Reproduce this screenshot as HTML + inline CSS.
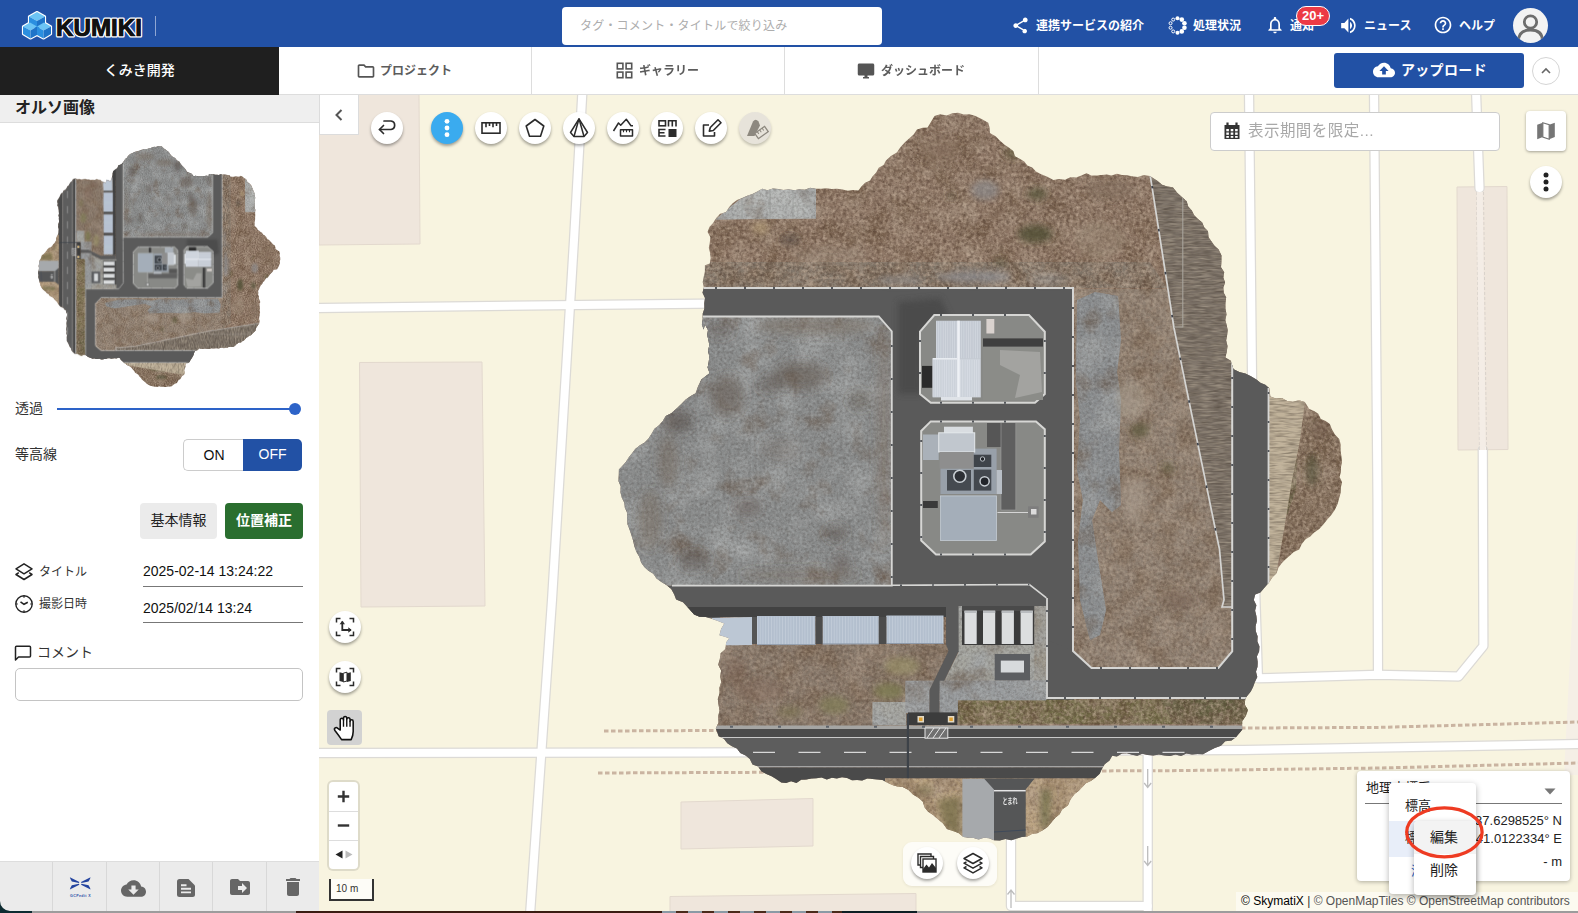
<!DOCTYPE html>
<html lang="ja">
<head>
<meta charset="utf-8">
<title>KUMIKI</title>
<style>
*{box-sizing:border-box;margin:0;padding:0}
html,body{width:1578px;height:913px;overflow:hidden;background:#fff}
body{font-family:"Liberation Sans","Noto Sans CJK JP",sans-serif;color:#222;position:relative;font-size:14px}
.abs{position:absolute}
#topbar{position:absolute;left:0;top:0;width:1578px;height:47px;background:#2251a5}
#topbar .nav{position:absolute;top:0;height:47px;line-height:52px;color:#fff;font-size:12px;font-weight:700;white-space:nowrap}
#search{position:absolute;left:562px;top:7px;width:320px;height:38px;background:#fff;border-radius:4px;color:#adadad;font-size:12px;line-height:38px;padding-left:18px;letter-spacing:.2px}
#bar2{position:absolute;left:0;top:47px;width:1578px;height:48px;background:#fff;border-bottom:1px solid #ddd;z-index:5}
#proj{position:absolute;left:0;top:0;width:279px;height:48px;background:#1f1f1f;color:#fff;font-size:14px;font-weight:500;text-align:center;line-height:47px}
.tab{position:absolute;top:0;height:47px;border-right:1px solid #ddd;color:#5c5c5c;font-size:12px;font-weight:700;line-height:49px;white-space:nowrap}
#upload{position:absolute;left:1334px;top:6px;width:190px;height:35px;background:#2251a5;border-radius:3px;color:#fff;font-size:14px;font-weight:700;line-height:34px;letter-spacing:.3px}
#side{position:absolute;left:0;top:94px;width:319px;height:817px;background:#fff}
#sidehead{position:absolute;left:0;top:0;width:319px;height:29px;background:#efefef;border-bottom:1px solid #ddd;font-size:16px;font-weight:700;color:#222;padding-left:15px;line-height:27px}
#map{position:absolute;left:319px;top:94px;width:1259px;height:817px;background:#f8f4e0;overflow:hidden}
.rbtn{position:absolute;width:32px;height:32px;border-radius:50%;background:#fff;box-shadow:0 2px 3px rgba(0,0,0,.35)}
.rbtn svg{position:absolute;left:0;top:0}
</style>
</head>
<body>
<div id="topbar">
  <svg class="abs" style="left:20px;top:8px" width="140" height="34" viewBox="0 0 140 34">
    <!-- cube logo -->
    <g stroke="#fff" stroke-width="2.200" stroke-linejoin="round" fill="#fff">
      <path d="M17 4 L25 8.5 L25 15 L31 18.5 L31 26 L23.5 30.5 L17 27 L10.5 30.5 L3 26 L3 18.5 L9 15 L9 8.5 Z"/>
    </g>
    <g stroke="none">
      <path d="M17 4 L25 8.5 L17 13 L9 8.5 Z" fill="#6cc4f5"/>
      <path d="M9 8.5 L17 13 L17 21 L9 16.5 Z" fill="#2b8fe0"/>
      <path d="M25 8.5 L17 13 L17 21 L25 16.5 Z" fill="#1f74c9"/>
      <path d="M10 14.5 L17 18.5 L10.5 22.5 L3 18.5 Z" fill="#6cc4f5"/>
      <path d="M3 18.5 L10.5 22.5 L10.5 30.5 L3 26 Z" fill="#2b8fe0"/>
      <path d="M17 18.5 L10.5 22.5 L10.5 30.5 L17 27 Z" fill="#1f74c9"/>
      <path d="M24 14.5 L31 18.5 L23.5 22.5 L17 18.5 Z" fill="#6cc4f5"/>
      <path d="M17 18.5 L23.5 22.5 L23.5 30.5 L17 27 Z" fill="#2b8fe0"/>
      <path d="M31 18.5 L23.5 22.5 L23.5 30.5 L31 26 Z" fill="#1f74c9"/>
    </g>
    <text x="36" y="27.5" font-family="'Liberation Sans',sans-serif" font-weight="700" font-size="23" fill="#111" stroke="#fff" stroke-width="3.2" stroke-linejoin="round" paint-order="stroke" textLength="86" lengthAdjust="spacingAndGlyphs">KUMIKI</text>
    <text x="36" y="27.5" font-family="'Liberation Sans',sans-serif" font-weight="700" font-size="23" fill="#111" stroke="#111" stroke-width="0.700" textLength="86" lengthAdjust="spacingAndGlyphs">KUMIKI</text>
    <rect x="135" y="8" width="1" height="20" fill="#8fa6d3"/>
  </svg>
  <div id="search">タグ・コメント・タイトルで絞り込み</div>

  <svg class="abs" style="left:1011px;top:16px" width="19" height="19" viewBox="0 0 24 24"><path fill="#fff" d="M18 16.08c-.76 0-1.44.3-1.96.77L8.91 12.7c.05-.23.09-.46.09-.7s-.04-.47-.09-.7l7.05-4.11c.54.5 1.250.81 2.040.81 1.660 0 3-1.340 3-3s-1.340-3-3-3-3 1.340-3 3c0 .24.040.47.090.7L8.040 9.810C7.500 9.310 6.790 9 6 9c-1.660 0-3 1.340-3 3s1.340 3 3 3c.79 0 1.500-.31 2.040-.81l7.120 4.160c-.5.21-.8.430-.8.650 0 1.610 1.310 2.920 2.920 2.920s2.920-1.310 2.920-2.920-1.310-2.920-2.920-2.920z"/></svg>
  <div class="nav" style="left:1036px">連携サービスの紹介</div>

  <svg class="abs" style="left:1167px;top:15px" width="21" height="21" viewBox="0 0 21 21"><circle cx="10.50" cy="3.20" r="2.00" fill="#fff"/><circle cx="14.79" cy="4.59" r="2.30" fill="#fff"/><circle cx="17.44" cy="8.24" r="2.30" fill="#fff"/><circle cx="17.44" cy="12.76" r="2.30" fill="#fff"/><circle cx="14.79" cy="16.41" r="2.30" fill="#fff"/><circle cx="10.50" cy="17.80" r="2.00" fill="#fff"/><circle cx="6.21" cy="16.41" r="1.500" fill="none" stroke="#fff" stroke-width="1"/><circle cx="3.56" cy="12.76" r="1.500" fill="none" stroke="#fff" stroke-width="1"/><circle cx="3.56" cy="8.24" r="1.500" fill="none" stroke="#fff" stroke-width="1"/><circle cx="6.21" cy="4.59" r="1.500" fill="none" stroke="#fff" stroke-width="1"/></svg>
  <div class="nav" style="left:1193px">処理状況</div>

  <svg class="abs" style="left:1265px;top:15px" width="20" height="20" viewBox="0 0 24 24"><path fill="#fff" d="M12 22c1.100 0 2-.9 2-2h-4c0 1.100.9 2 2 2zm6-6v-5c0-3.070-1.630-5.640-4.500-6.320V4c0-.83-.67-1.500-1.500-1.500s-1.500.67-1.500 1.500v.68C7.640 5.360 6 7.920 6 11v5l-2 2v1h16v-1l-2-2zm-2 1H8v-6c0-2.480 1.510-4.500 4-4.500s4 2.020 4 4.500v6z"/></svg>
  <div class="nav" style="left:1290px">通知</div>
  <div class="abs" style="left:1296px;top:6px;width:34px;height:20px;border-radius:10px;background:#ec3a45;border:1.500px solid #fff;color:#fff;font-size:13px;font-weight:700;text-align:center;line-height:17px;letter-spacing:0">20+</div>

  <svg class="abs" style="left:1337px;top:15px" width="21" height="21" viewBox="0 0 24 24"><path fill="#fff" d="M3 9v6h4l5 5V4L7 9H3zm13.500 3c0-1.770-1.020-3.290-2.500-4.030v8.050c1.480-.73 2.500-2.250 2.500-4.020zM14 3.230v2.060c2.890.86 5 3.540 5 6.710s-2.110 5.850-5 6.710v2.060c4.010-.91 7-4.490 7-8.770s-2.990-7.860-7-8.770z" transform="translate(2 0) scale(.92 1)"/></svg>
  <div class="nav" style="left:1364px">ニュース</div>

  <svg class="abs" style="left:1433px;top:15px" width="20" height="20" viewBox="0 0 24 24"><path fill="#fff" d="M11 18h2v-2h-2v2zm1-16C6.480 2 2 6.480 2 12s4.480 10 10 10 10-4.480 10-10S17.520 2 12 2zm0 18c-4.410 0-8-3.590-8-8s3.590-8 8-8 8 3.590 8 8-3.590 8-8 8zm0-14c-2.210 0-4 1.790-4 4h2c0-1.100.9-2 2-2s2 .9 2 2c0 2-3 1.750-3 5h2c0-2.250 3-2.500 3-5 0-2.210-1.790-4-4-4z"/></svg>
  <div class="nav" style="left:1459px">ヘルプ</div>

  <div class="abs" style="left:1513px;top:8px;width:35px;height:35px;border-radius:50%;background:#f3f3f3;overflow:hidden">
    <svg width="35" height="35" viewBox="0 0 35 35" fill="none" stroke="#6e6e6e" stroke-width="2.800"><circle cx="17.500" cy="14" r="6.200"/><path d="M5.500 33 C5.500 24.500 11 22 17.500 22 C24 22 29.500 24.500 29.500 33"/></svg>
  </div>
</div>

<div id="bar2">
  <div id="proj">くみき開発</div>
  <div class="tab" style="left:279px;width:253px">
    <svg class="abs" style="left:77px;top:14px" width="20" height="20" viewBox="0 0 24 24"><path fill="#555" d="M9.170 6l2 2H20v10H4V6h5.170M10 4H4c-1.100 0-1.990.9-1.990 2L2 18c0 1.100.9 2 2 2h16c1.100 0 2-.9 2-2V8c0-1.100-.9-2-2-2h-8l-2-2z"/></svg>
    <span class="abs" style="left:101px">プロジェクト</span>
  </div>
  <div class="tab" style="left:532px;width:253px">
    <svg class="abs" style="left:84px;top:15px" width="17" height="17" viewBox="0 0 17 17" fill="none" stroke="#555" stroke-width="1.600"><rect x="1.300" y="1.300" width="5.600" height="5.600"/><rect x="10.100" y="1.300" width="5.600" height="5.600"/><rect x="1.300" y="10.100" width="5.600" height="5.600"/><rect x="10.100" y="10.100" width="5.600" height="5.600"/></svg>
    <span class="abs" style="left:107px">ギャラリー</span>
  </div>
  <div class="tab" style="left:785px;width:254px">
    <svg class="abs" style="left:72px;top:15px" width="18" height="18" viewBox="0 0 24 24"><path fill="#555" d="M21 2H3c-1.100 0-2 .9-2 2v12c0 1.100.9 2 2 2h7v2H8v2h8v-2h-2v-2h7c1.100 0 2-.9 2-2V4c0-1.100-.9-2-2-2z"/></svg>
    <span class="abs" style="left:96px">ダッシュボード</span>
  </div>
  <div id="upload">
    <svg class="abs" style="left:39px;top:6px" width="22" height="22" viewBox="0 0 24 24"><path fill="#fff" d="M19.350 10.040C18.670 6.590 15.640 4 12 4 9.110 4 6.600 5.640 5.350 8.040 2.340 8.360 0 10.910 0 14c0 3.310 2.690 6 6 6h13c2.760 0 5-2.240 5-5 0-2.640-2.050-4.780-4.650-4.960zM14 13v4h-4v-4H7l5-5 5 5h-3z"/></svg>
    <span class="abs" style="left:67px">アップロード</span>
  </div>
  <div class="abs" style="left:1532px;top:10px;width:28px;height:28px;border-radius:50%;border:1px solid #d5d5d5;background:#fff">
    <svg class="abs" style="left:6px;top:6px" width="14" height="14" viewBox="0 0 14 14" fill="none" stroke="#666" stroke-width="1.600"><path d="M3 9 L7 5 L11 9"/></svg>
  </div>
</div>

<div id="side">
  <div id="sidehead">オルソ画像</div>
  <svg class="abs" style="left:30px;top:48px" width="260" height="250" viewBox="30 142 260 250"><use href="#orthoThumb"/></svg>
  <div class="abs" style="left:15px;top:304px;font-size:14px;line-height:20px;color:#333">透過</div>
  <div class="abs" style="left:57px;top:314px;width:238px;height:2px;background:#2d63c8"></div>
  <div class="abs" style="left:289px;top:309px;width:12px;height:12px;border-radius:50%;background:#2d63c8"></div>
  <div class="abs" style="left:15px;top:350px;font-size:14px;line-height:20px;color:#333">等高線</div>
  <div class="abs" style="left:183px;top:345px;width:61px;height:32px;border:1px solid #ccc;border-right:none;border-radius:5px 0 0 5px;background:#fff;color:#111;font-size:14px;text-align:center;line-height:30px">ON</div>
  <div class="abs" style="left:243px;top:345px;width:59px;height:32px;border-radius:0 5px 5px 0;background:#2251a5;color:#fff;font-size:14px;text-align:center;line-height:31px">OFF</div>
  <div class="abs" style="left:140px;top:409px;width:77px;height:36px;border-radius:4px;background:#ebebeb;color:#222;font-size:14px;text-align:center;line-height:35px">基本情報</div>
  <div class="abs" style="left:225px;top:409px;width:78px;height:36px;border-radius:4px;background:#2a6e2f;color:#fff;font-size:14px;font-weight:700;text-align:center;line-height:35px">位置補正</div>

  <svg class="abs" style="left:14px;top:468px" width="20" height="20" viewBox="0 0 20 20" fill="none" stroke="#222" stroke-width="1.500" stroke-linejoin="round"><path d="M10 1.800 L18 6.800 L10 11.800 L2 6.800 Z"/><path d="M4.800 10.700 L2 12.500 L10 17.500 L18 12.500 L15.200 10.700"/></svg>
  <div class="abs" style="left:39px;top:468px;font-size:12px;line-height:20px;color:#333">タイトル</div>
  <div class="abs" style="left:143px;top:467px;width:160px;height:26px;border-bottom:1px solid #777;font-size:14px;line-height:20px;color:#111">2025-02-14 13:24:22</div>

  <svg class="abs" style="left:14px;top:500px" width="20" height="20" viewBox="0 0 20 20" fill="none" stroke="#222" stroke-width="1.400"><circle cx="10" cy="10" r="8.200"/><path d="M6.500 7.800 L10 10.300 L13.800 8.300" stroke-width="1.600"/><path d="M10 1.800v2M10 16.200v2M1.800 10h2M16.200 10h2" stroke-width="1.200"/></svg>
  <div class="abs" style="left:39px;top:500px;font-size:12px;line-height:20px;color:#333">撮影日時</div>
  <div class="abs" style="left:143px;top:504px;width:160px;height:25px;border-bottom:1px solid #777;font-size:14px;line-height:20px;color:#111">2025/02/14 13:24</div>

  <svg class="abs" style="left:14px;top:550px" width="18" height="18" viewBox="0 0 18 18" fill="none" stroke="#222" stroke-width="1.500" stroke-linejoin="round"><path d="M1.500 16 V3.200 Q1.500 2.200 2.500 2.200 H15.500 Q16.500 2.200 16.500 3.200 V12 Q16.500 13 15.500 13 H4.500 Z"/></svg>
  <div class="abs" style="left:37px;top:548px;font-size:14px;line-height:20px;color:#333">コメント</div>
  <div class="abs" style="left:15px;top:574px;width:288px;height:33px;border:1px solid #c4c4c4;border-radius:5px;background:#fff"></div>

  <div class="abs" style="left:0;top:767px;width:319px;height:50px;background:#ebebeb;border-top:1px solid #ddd">
    <div class="abs" style="left:52px;top:0;width:1px;height:50px;background:#d8d8d8"></div>
    <div class="abs" style="left:106px;top:0;width:1px;height:50px;background:#d8d8d8"></div>
    <div class="abs" style="left:159px;top:0;width:1px;height:50px;background:#d8d8d8"></div>
    <div class="abs" style="left:212px;top:0;width:1px;height:50px;background:#d8d8d8"></div>
    <div class="abs" style="left:266px;top:0;width:1px;height:50px;background:#d8d8d8"></div>
    <svg class="abs" style="left:68px;top:13px" width="24" height="26" viewBox="0 0 24 26">
      <path fill="#24449f" d="M1.860 2.150 L11.330 7.120 L10.930 7.900 L3.830 6.400 L2.330 3.850 Z M1.860 14.600 L11.330 9.650 L10.930 8.860 L3.830 10.360 L2.330 12.900 Z M22.540 2.150 L13.070 7.120 L13.470 7.900 L20.570 6.400 L22.070 3.850 Z M22.540 14.600 L13.070 9.650 L13.470 8.860 L20.570 10.360 L22.070 12.900 Z"/>
      <text x="12.300" y="22.100" text-anchor="middle" font-size="3.600" font-weight="700" fill="#2a4ea8" font-family="'Liberation Sans',sans-serif" textLength="20.500">GCPedit X</text>
    </svg>
    <svg class="abs" style="left:120.500px;top:14px" width="25" height="25" viewBox="0 0 24 24"><path fill="#666" d="M19.350 10.040C18.670 6.590 15.640 4 12 4 9.110 4 6.600 5.640 5.350 8.040 2.340 8.360 0 10.910 0 14c0 3.310 2.690 6 6 6h13c2.760 0 5-2.240 5-5 0-2.640-2.050-4.780-4.650-4.960zM17 13l-5 5-5-5h3V9h4v4h3z"/></svg>
    <svg class="abs" style="left:176px;top:16px" width="20" height="20" viewBox="0 0 20 20"><path fill="#666" d="M3.500 1 H12.500 L19 7.500 V16.500 Q19 19 16.500 19 H3.500 Q1 19 1 16.500 V3.500 Q1 1 3.500 1 Z"/><path d="M5 7.200 H10.500 M5 10.800 H15 M5 14.400 H15" stroke="#ebebeb" stroke-width="1.900" fill="none"/></svg>
    <svg class="abs" style="left:228px;top:13px" width="24" height="24" viewBox="0 0 24 24"><path fill="#666" d="M20 6h-8l-2-2H4c-1.100 0-2 .9-2 2v12c0 1.100.9 2 2 2h16c1.100 0 2-.9 2-2V8c0-1.100-.9-2-2-2zm-6 12v-3h-4v-4h4V8l5 5-5 5z"/></svg>
    <svg class="abs" style="left:281px;top:13px" width="24" height="24" viewBox="0 0 24 24"><path fill="#666" d="M6 19c0 1.100.9 2 2 2h8c1.100 0 2-.9 2-2V7H6v12zM19 4h-3.500l-1-1h-5l-1 1H5v2h14V4z"/></svg>
  </div>
</div>

<div id="map">
<svg class="abs" style="left:0;top:0" width="1259" height="817" viewBox="319 94 1259 817">
  <defs>
<filter id="blur6" x="-0.1" y="-0.1" width="1.2" height="1.2"><feGaussianBlur stdDeviation="5"/></filter>
<clipPath id="gravClip"><polygon points="600,317 878.8,317 891.5,331.4 891.5,585.6 600,585.6"/></clipPath>
<filter id="blur3" x="-0.2" y="-0.2" width="1.4" height="1.4"><feGaussianBlur stdDeviation="3"/></filter>
<filter id="texVeg" x="0" y="0" width="1" height="1" color-interpolation-filters="sRGB">
 <feTurbulence type="fractalNoise" baseFrequency="0.3" numOctaves="3" seed="3" result="f"/>
 <feColorMatrix in="f" type="matrix" values="0 0 0 0 0.33  0 0 0 0 0.25  0 0 0 0 0.20  1.3 0 0 0 -0.5" result="d"/>
 <feColorMatrix in="f" type="matrix" values="0 0 0 0 0.78  0 0 0 0 0.70  0 0 0 0 0.62  0 1.3 0 0 -0.5" result="l0"/>
 <feTurbulence type="fractalNoise" baseFrequency="0.045" numOctaves="3" seed="11" result="g"/>
 <feColorMatrix in="g" type="matrix" values="0 0 0 0 0.68  0 0 0 0 0.61  0 0 0 0 0.54  0 1.6 0 0 -0.68" result="l"/>
 <feColorMatrix in="g" type="matrix" values="0 0 0 0 0.40  0 0 0 0 0.31  0 0 0 0 0.23  0 0 1.6 0 -0.68" result="dk"/>
 <feMerge result="m"><feMergeNode in="l"/><feMergeNode in="dk"/><feMergeNode in="d"/><feMergeNode in="l0"/></feMerge>
 <feComposite in="m" in2="SourceGraphic" operator="in" result="mc"/>
 <feMerge><feMergeNode in="SourceGraphic"/><feMergeNode in="mc"/></feMerge>
</filter>
<filter id="texVeg2" x="0" y="0" width="1" height="1" color-interpolation-filters="sRGB">
 <feTurbulence type="fractalNoise" baseFrequency="0.3" numOctaves="3" seed="3" result="f"/>
 <feColorMatrix in="f" type="matrix" values="0 0 0 0 0.33  0 0 0 0 0.25  0 0 0 0 0.20  0.9 0 0 0 -0.34" result="d"/>
 <feColorMatrix in="f" type="matrix" values="0 0 0 0 0.78  0 0 0 0 0.70  0 0 0 0 0.62  0 0.9 0 0 -0.34" result="l0"/>
 <feTurbulence type="fractalNoise" baseFrequency="0.045" numOctaves="3" seed="11" result="g"/>
 <feColorMatrix in="g" type="matrix" values="0 0 0 0 0.68  0 0 0 0 0.61  0 0 0 0 0.54  0 1.3 0 0 -0.55" result="l"/>
 <feColorMatrix in="g" type="matrix" values="0 0 0 0 0.40  0 0 0 0 0.31  0 0 0 0 0.23  0 0 1.3 0 -0.55" result="dk"/>
 <feMerge result="m"><feMergeNode in="l"/><feMergeNode in="dk"/><feMergeNode in="d"/><feMergeNode in="l0"/></feMerge>
 <feComposite in="m" in2="SourceGraphic" operator="in" result="mc"/>
 <feMerge><feMergeNode in="SourceGraphic"/><feMergeNode in="mc"/></feMerge>
</filter>
<filter id="texSoft" x="0" y="0" width="1" height="1" color-interpolation-filters="sRGB">
 <feTurbulence type="fractalNoise" baseFrequency="0.08 0.55" numOctaves="2" seed="8" result="f"/>
 <feColorMatrix in="f" type="matrix" values="0 0 0 0 0.28  0 0 0 0 0.24  0 0 0 0 0.20  1.0 0 0 0 -0.36" result="d"/>
 <feColorMatrix in="f" type="matrix" values="0 0 0 0 0.78  0 0 0 0 0.73  0 0 0 0 0.65  0 1.0 0 0 -0.4" result="l0"/>
 <feMerge result="m"><feMergeNode in="d"/><feMergeNode in="l0"/></feMerge>
 <feComposite in="m" in2="SourceGraphic" operator="in" result="mc"/>
 <feMerge><feMergeNode in="SourceGraphic"/><feMergeNode in="mc"/></feMerge>
</filter>
<filter id="texGravel" x="0" y="0" width="1" height="1" color-interpolation-filters="sRGB">
 <feTurbulence type="fractalNoise" baseFrequency="0.35" numOctaves="3" seed="5" result="f"/>
 <feColorMatrix in="f" type="matrix" values="0 0 0 0 0.32  0 0 0 0 0.30  0 0 0 0 0.29  0.75 0 0 0 -0.27" result="d"/>
 <feColorMatrix in="f" type="matrix" values="0 0 0 0 0.74  0 0 0 0 0.75  0 0 0 0 0.75  0 0.75 0 0 -0.29" result="l0"/>
 <feTurbulence type="fractalNoise" baseFrequency="0.03" numOctaves="4" seed="23" result="g"/>
 <feColorMatrix in="g" type="matrix" values="0 0 0 0 0.42  0 0 0 0 0.36  0 0 0 0 0.31  0 2.2 0 0 -1.22" result="br"/>
 <feColorMatrix in="g" type="matrix" values="0 0 0 0 0.64  0 0 0 0 0.65  0 0 0 0 0.65  0 0 2.4 0 -1.05" result="lt"/>
 <feMerge result="m"><feMergeNode in="lt"/><feMergeNode in="br"/><feMergeNode in="d"/><feMergeNode in="l0"/></feMerge>
 <feComposite in="m" in2="SourceGraphic" operator="in" result="mc"/>
 <feMerge><feMergeNode in="SourceGraphic"/><feMergeNode in="mc"/></feMerge>
</filter>

<clipPath id="orthoClip"><polygon points="703.6,329.4 701.9,324.2 702.8,318.9 702.7,313.7 704.4,308.5 704.3,303.3 705,298.1 702.5,292.8 703.8,287.6 702.7,282.1 703.7,276.7 704.9,271.4 704.9,265.3 709.8,263.5 710.6,258.2 710.1,253 708.8,247.8 709.8,242.5 710.4,237.2 707.6,232 709.4,227 713.3,222.7 716.4,217.7 720.1,213.7 726,212.3 729,207.3 732.7,203.3 737,200 742.2,198.1 747.2,195.7 752.5,194 757.4,191.6 762.2,188.8 767.5,190.3 772.9,188.4 778.2,189 783.5,190 788.8,189.3 794.2,190.2 799.5,189.3 804.8,189.8 810.2,187.7 815.5,188.8 820.9,188.7 826.3,188.2 831.7,188.9 837.1,188.7 842.5,189.4 847.8,190.8 853.2,190.1 858.4,190.6 861.4,186.4 865,182.8 870,180.6 872.7,176.2 876.2,172.4 878.7,167.7 883.5,165.1 886,160.4 890.8,155.9 896.8,152.6 900.6,147.1 904.7,142.6 909.1,138.5 913.6,134.4 917,129.6 922.5,127.7 927.6,127.5 930.9,121.9 934.5,116.1 940.3,114.3 946.7,115.4 952.2,113.3 958.1,112.7 963.7,114.4 969.5,114.2 974.9,115.8 981.6,118.9 988.2,122.7 989.7,127.7 989.9,133.1 995.6,136.2 1000,140.8 1004.9,144.9 1009.1,147.8 1013.2,151 1015,156.3 1019.7,158.8 1024.3,161.5 1027.3,165.4 1032.2,167.4 1036,171.4 1040.6,173.9 1047.3,176.8 1053.4,179.9 1059,179.1 1065,179.8 1070.3,177.2 1076.1,177.4 1081.4,175.4 1086.5,173.2 1091.5,175.5 1096.6,175.4 1101.6,174.9 1106.7,174.4 1111.7,175.4 1116.9,173.8 1121.9,175 1126.9,175.2 1132,176.2 1137.9,176.9 1143.9,175.1 1149.8,176 1157.6,181.1 1162,184.8 1167.1,186.6 1172.8,187.3 1177.4,192.9 1182.7,197.7 1186.7,201.2 1188.2,206.6 1191.8,210.5 1194.2,215.2 1198,219 1202.2,222.5 1204.3,227.4 1208,231.3 1208.5,237.2 1211.5,241.5 1214.5,245.8 1218.6,249.5 1221.5,255.4 1221.4,262.1 1221,267.3 1224.2,272.2 1223.3,277.4 1225.1,282.4 1223.3,287.6 1223.7,292.7 1226.2,297.6 1225.4,302.8 1225.4,308.5 1226.5,314.2 1225.3,320.1 1226.6,325 1227.7,330.1 1227.1,335.2 1226.1,340.6 1227.5,346.1 1226.8,351.4 1225.4,357.4 1230.8,360.7 1233.5,369.3 1239.2,372 1245.4,373.4 1251,376.2 1256.4,379.4 1260.4,382.8 1265.3,384.8 1269.4,388.3 1270.3,396.6 1275.9,398.6 1281.8,398.1 1287.2,401.1 1292.9,401.8 1299,400.2 1304.8,402.1 1309.3,408.9 1314.1,411 1318.3,413.8 1320.8,418.9 1325.6,421 1329.8,423.9 1332,429.4 1334.9,434.5 1339.2,439 1340.8,444.6 1340.6,450.5 1341.4,456.2 1342.1,462 1341,467 1340.9,472.1 1339.6,477.1 1342.1,482.3 1340.9,487.3 1340.8,492.4 1339.5,497.1 1337.7,503.7 1334.9,509.7 1331.1,515.3 1327.1,519.8 1323.3,524.5 1319.3,529 1314.2,532.4 1310.3,536.6 1305.3,539.6 1301.8,544.1 1299.2,549.4 1293.7,552.1 1289.7,555.7 1285.6,559.2 1281.9,563.1 1278.5,567.6 1276.5,573.2 1272.4,577.2 1269.4,582.1 1264,588.3 1260.3,592.5 1255.2,594.5 1253.8,600 1256.4,605.2 1255.1,610.7 1256.4,616 1256.9,621.1 1255.6,626.2 1255.8,631.3 1257.6,636.3 1257.4,641.4 1259.5,646.4 1259.1,651.5 1256.9,656.4 1257.7,661.6 1257.5,666.7 1256,671.7 1257.3,677.1 1254.9,682 1253.1,687 1250.8,691.6 1245.4,698.3 1244.7,704.4 1248,710.1 1245.8,715.9 1242.2,721.2 1242.2,729.8 1236.2,736.9 1231.5,740.5 1225.2,741.3 1221,745.7 1214.7,748 1208.8,750.9 1203,754.3 1197.5,754.1 1192,754.6 1186.4,753.5 1181,756 1175.5,754.6 1170,755.9 1164.4,755.6 1158.9,754.4 1153.3,755.4 1147.7,755 1142.2,753.8 1137.2,755.8 1132.1,754.8 1126.9,753.3 1121.9,753.5 1116.9,756.6 1112.2,755.7 1109.5,760.6 1104.7,764.2 1101.9,769 1099.7,773.8 1095.4,777.8 1090.8,781 1085.9,783.3 1082.4,787.1 1078.8,790.8 1074.6,794 1070.6,799.3 1067.9,805.6 1062.1,809.4 1059.6,814.3 1055.3,817.8 1051.9,821.8 1047.8,826.8 1042.8,830.2 1037.2,833.2 1031.9,834 1027.2,836.4 1021.8,837 1016.9,838.6 1011.2,840.2 1005.4,839.1 999.8,840.6 994,840.2 989.1,838.3 984,837.8 978.6,839.6 973.7,837.9 968.6,837.7 963.3,837.1 958.5,833.1 952.9,830.9 946.9,829.1 943.1,823.6 938,819.3 933.1,814.9 928.2,811.7 924.6,807.5 922.7,801.6 918.4,797.8 913,794.4 908.5,789.9 902.8,786.9 897.4,786.5 892.3,784.9 887.4,782.8 882.5,780 877.5,779.4 872.4,778.9 867.4,778.5 862.2,780.5 857.1,780.1 852,780.3 847.1,777.9 842,777.3 836.9,778.6 831.8,777.8 826.8,779.6 821.5,777.6 816.4,778.3 811.3,778.5 806.3,779.5 801.2,779.8 796.4,783 791.1,781.2 786.1,783 781.3,782.4 776.5,779.3 771.6,776.2 766.3,773.9 761.3,771.3 758.1,766.4 752.5,764.5 749.8,759 745.6,755.4 740.3,753.1 736.9,748.6 731.9,746.2 727.3,743.3 723.9,738.7 718.6,736.3 715.8,728.3 718.6,722.5 718.2,716.6 719.5,710.6 718.6,704.9 717.8,699 719.6,693.4 719.5,687.7 721.2,682 720.2,676.2 721.2,670.4 718.2,664.8 719.8,659.3 720.7,653.2 725.5,648.9 726.1,642.6 729.1,638.2 724.1,636.5 719.4,635.2 721.1,629.1 724.3,623.5 717.9,621.1 711.5,618.8 705.7,617.1 699.5,616.8 694.1,614.6 688.3,607.9 683,602.2 676.1,599.6 674.1,594.2 671.2,589.1 666.7,585.2 661.4,582.1 656.5,578.5 653.3,573.8 648.4,570.8 644.3,567 641.1,562.6 639.4,556.9 636.2,551.6 634.3,545.9 632.9,540 631.3,534.8 629.5,529.5 627.5,524.3 627,518.8 627.2,513 624.9,507.9 624.2,502.4 621.7,497.4 620.4,491.9 620.7,486.3 618.4,480.9 618.8,475.2 618.9,469.5 622.5,465.7 626,461.8 628.8,457.3 632.1,453.2 635.2,449 639.6,445.4 644.6,442.6 648.5,438.5 651.6,433.7 654.4,428.8 659,425.2 662.8,421 665.7,416.1 671.6,412.9 676.5,408.5 681.3,403.9 685.7,399.6 690.7,396.1 695.6,393.2 698.1,386.3 701.4,379.6 709.6,373.2 707.6,367.6 708.7,362 709.4,356.5 708,350.9 709.3,345.3 708.5,340.2 707.2,335.3 708,330.1 705.4,325.2 706.1,319.9"/></clipPath>
<g id="orthoG" clip-path="url(#orthoClip)"><g filter="url(#texVeg)">
<rect x="600" y="100" width="760" height="760" fill="#8b7463"/>
<polygon points="700,262 1150,262 1167,288 700,288" fill="#82776b"/>
<polygon points="1305,400 1345,420 1345,520 1300,560 1279,560 1284,530 1294,480 1300,440" fill="#826e5b"/>
<polygon points="1288,470 1297,455 1296,490 1287,515" fill="#5c5a3c"/>
</g>
<g filter="url(#texSoft)">
<polygon points="1150,176 1240,176 1240,610 1224,607 1219.5,549 1174,328" fill="#7a7066"/>
<polygon points="1268,385 1305,400 1300,440 1292,480 1284,530 1276,575 1268,595" fill="#c0b29a"/>
</g>
<polygon points="705,230 716.6,218.6 742,197.6 762,188 816,188 816,218.6 705,219.5" fill="#babcba" filter="url(#texGravel)"/>
<polyline points="742,198 742,219" fill="none" stroke="#9a9c9a" stroke-width="0.8"/>
<polyline points="770,189 770,219" fill="none" stroke="#9a9c9a" stroke-width="0.8"/>
<polyline points="793,189 793,219" fill="none" stroke="#9a9c9a" stroke-width="0.8"/>
<polyline points="720,206 816,206" fill="none" stroke="#a2a4a2" stroke-width="0.7"/>
<rect x="700" y="288" width="373" height="319" fill="#5a5a5a"/>
<rect x="600" y="585.6" width="120" height="32.4" fill="#5a5a5a"/>
<rect x="1046" y="288" width="28" height="412" fill="#5a5a5a"/>
<polygon points="1047,640 1075,651.5 1091.5,668 1218.3,668 1232.2,651.5 1232.2,365 1269,385 1269,600 1262,700 1047,698" fill="#5a5a5a"/>
<polygon points="600,331.5 600,317 878.8,317 891.5,331.4 891.5,585.6 600,585.6" fill="#898b8b" filter="url(#texGravel)"/>
<g clip-path="url(#gravClip)"><g filter="url(#blur6)">
<ellipse cx="800" cy="376" rx="27" ry="14" fill="#54463d" opacity="0.41"/>
<ellipse cx="770" cy="385" rx="12" ry="9" fill="#4a3d36" opacity="0.33"/>
<ellipse cx="727" cy="396" rx="17" ry="21" fill="#5a4a40" opacity="0.39"/>
<ellipse cx="676" cy="421" rx="17" ry="12" fill="#463b36" opacity="0.44"/>
<ellipse cx="668" cy="462" rx="10" ry="26" fill="#6a5646" opacity="0.36"/>
<ellipse cx="747" cy="507" rx="14" ry="10" fill="#5a4a40" opacity="0.3"/>
<ellipse cx="836" cy="533" rx="11" ry="8" fill="#4a3d36" opacity="0.41"/>
<ellipse cx="694" cy="560" rx="16" ry="10" fill="#4a3d36" opacity="0.39"/>
<ellipse cx="841" cy="565" rx="8" ry="10" fill="#54463d" opacity="0.39"/>
<ellipse cx="815" cy="326" rx="60" ry="9" fill="#7a6450" opacity="0.33"/>
<ellipse cx="884" cy="440" rx="7" ry="110" fill="#7a6450" opacity="0.25"/>
<ellipse cx="650" cy="520" rx="12" ry="30" fill="#6a5646" opacity="0.28"/>
<ellipse cx="780" cy="450" rx="20" ry="12" fill="#6a5a4e" opacity="0.19"/>
<ellipse cx="860" cy="400" rx="12" ry="10" fill="#5a4a40" opacity="0.25"/>
<ellipse cx="720" cy="330" rx="14" ry="8" fill="#54463d" opacity="0.28"/>
<ellipse cx="800" cy="575" rx="60" ry="7" fill="#6a5646" opacity="0.22"/>
</g></g>
<g filter="url(#texVeg2)">
<polygon points="1075,289 1167.5,289 1174,328 1219.5,549 1224,607 1232.2,607 1232.2,651.5 1218.3,668 1091.5,668 1075,651.5" fill="#8e8073"/>
</g>
<polygon points="1077,300 1095,292 1118,296 1121,340 1117,372 1121,400 1119,450 1121,505 1112,512 1100,500 1092,520 1098,560 1106,610 1100,635 1090,640 1080,600 1078,540 1083,500 1077,470 1080,420 1076,380" fill="#8a8d8f" filter="url(#texGravel)"/>
<g filter="url(#blur3)">
<ellipse cx="1037" cy="194" rx="10" ry="6" fill="#4f4f35" opacity="0.7"/>
<ellipse cx="1035" cy="234" rx="17" ry="9" fill="#4c4d33" opacity="0.75"/>
<ellipse cx="1000" cy="262" rx="6" ry="4" fill="#4f4f35" opacity="0.5"/>
<ellipse cx="951" cy="196" rx="4" ry="3" fill="#4f4f35" opacity="0.5"/>
<ellipse cx="985" cy="190" rx="14" ry="10" fill="#8f9194" opacity="0.6"/>
<ellipse cx="974" cy="277" rx="38" ry="6" fill="#90939a" opacity="0.6"/>
<ellipse cx="900" cy="280" rx="22" ry="5" fill="#8e9194" opacity="0.45"/>
<ellipse cx="1050" cy="279" rx="20" ry="5" fill="#8e9194" opacity="0.4"/>
<ellipse cx="790" cy="240" rx="10" ry="6" fill="#3f3a30" opacity="0.5"/>
<ellipse cx="760" cy="228" rx="9" ry="6" fill="#c9b48a" opacity="0.5"/>
<ellipse cx="1100" cy="240" rx="25" ry="18" fill="#9c8a78" opacity="0.4"/>
<ellipse cx="830" cy="255" rx="40" ry="8" fill="#9a8c7c" opacity="0.35"/>
<ellipse cx="1110" cy="190" rx="25" ry="10" fill="#7a6a58" opacity="0.4"/>
<ellipse cx="940" cy="150" rx="20" ry="14" fill="#7d6752" opacity="0.4"/>
<ellipse cx="1012" cy="153" rx="8" ry="6" fill="#5a5538" opacity="0.5"/>
<ellipse cx="1140" cy="430" rx="9" ry="7" fill="#565638" opacity="0.6"/>
<ellipse cx="1168" cy="468" rx="6" ry="5" fill="#565638" opacity="0.5"/>
<ellipse cx="1130" cy="400" rx="14" ry="18" fill="#b0a496" opacity="0.45"/>
<ellipse cx="1135" cy="500" rx="12" ry="25" fill="#b3a79a" opacity="0.4"/>
<ellipse cx="1180" cy="600" rx="18" ry="10" fill="#6e5a48" opacity="0.4"/>
<ellipse cx="1312" cy="470" rx="6" ry="16" fill="#4f5036" opacity="0.6"/>
<ellipse cx="1320" cy="430" rx="10" ry="10" fill="#6e5a48" opacity="0.4"/>
</g>
<polygon points="898,302 940,298 950,318 924,332 922,394 898,394" fill="#474747" filter="url(#blur3)" opacity="0.75"/>
<polygon points="934.3,315 1029,315 1044.8,331.7 1044.8,394 1035,402.7 930.8,402.7 920,394 920,331.7" fill="#888986" stroke="#d6d6d4" stroke-width="2"/>
<polygon points="930.8,421.4 1036,421.4 1044.8,429.3 1044.8,541.5 1030.7,554.6 936,554.6 921.2,540.6 921.2,431" fill="#888986" stroke="#d6d6d4" stroke-width="2"/>
<rect x="983" y="338.4" width="60" height="8.2" fill="#3f3f3f"/>
<rect x="983" y="347" width="60" height="53" fill="#8b8c88"/>
<polygon points="1000,350 1040,352 1042,392 1015,398 1020,375 1000,365" fill="#a3a3a0"/>
<rect x="986.4" y="319" width="7.9" height="14.5" fill="#d9d2ce"/>
<rect x="922" y="365.9" width="10.6" height="21.9" fill="#2b2b2b"/>
<rect x="936" y="320.7" width="44.8" height="38.3" fill="#c4cad3"/>
<rect x="932.6" y="358.9" width="48.2" height="38.5" fill="#ccd2da"/>
<polyline points="936,339.8 980.8,339.8" fill="none" stroke="#dde2e9" stroke-width="37" stroke-dasharray="0.600 1.700" opacity="0.7"/>
<polyline points="932.6,378.2 980.8,378.2" fill="none" stroke="#e2e6ec" stroke-width="37" stroke-dasharray="0.600 1.700" opacity="0.7"/>
<rect x="957.2" y="320.7" width="2.6" height="76.7" fill="#eef1f5"/>
<rect x="932.6" y="358" width="24.6" height="1.6" fill="#e8ecf1"/>
<rect x="941" y="397" width="31" height="3.5" fill="#dfe3e8"/>
<rect x="987" y="423" width="14" height="24" fill="#565656"/>
<rect x="1001" y="423" width="14.8" height="87" fill="#5f5f5f"/>
<polyline points="1001,423 1001,510 1015.8,510 1015.8,423" fill="none" stroke="#9a9a98" stroke-width="0.7"/>
<rect x="923" y="501" width="14.8" height="7" fill="#3a3a3a"/>
<rect x="923" y="434.5" width="15.7" height="25.5" fill="#aab1b9"/>
<rect x="940.5" y="448.6" width="56.1" height="45.4" fill="#98a0a9"/>
<rect x="944" y="426.7" width="28.9" height="6.3" fill="#d9dde1"/>
<rect x="938.7" y="432.8" width="36" height="19.2" fill="#c1c7ce" stroke="#e4e8ec" stroke-width="1"/>
<rect x="939.6" y="452" width="34.2" height="16.7" fill="#8e8e8e"/>
<rect x="947" y="470" width="24" height="20.6" fill="#454a50"/>
<rect x="973.8" y="454.7" width="17.5" height="12.3" fill="#3f444a"/>
<rect x="973.8" y="469.6" width="17.5" height="21" fill="#43484e"/>
<circle cx="959.800" cy="476.300" r="6" fill="#2d3035" stroke="#c9cfd4" stroke-width="1.600"/>
<circle cx="984.600" cy="481.300" r="4.600" fill="#22252a" stroke="#c9cfd4" stroke-width="1.500"/>
<circle cx="982.500" cy="459" r="2.200" fill="#22252a" stroke="#b9bfc4" stroke-width="1"/>
<rect x="940.5" y="495.9" width="56.1" height="44.7" fill="#a4aeb9" stroke="#c3cbd3" stroke-width="0.800"/>
<rect x="996.6" y="470" width="5.4" height="24" fill="#b9bfc6"/>
<rect x="1028" y="506.4" width="10.6" height="11.4" fill="#7d7d7d"/>
<rect x="1031" y="509" width="5.5" height="5.5" fill="#dcdcdc"/>
<polyline points="997.4,512.5 1028,512.5" fill="none" stroke="#d5d5d5" stroke-width="1"/>
<rect x="686" y="607" width="260" height="10" fill="#424242"/>
<rect x="946" y="607" width="14" height="45" fill="#5a5a5a"/>
<polygon points="712,618 752,617 752,645 735,646 722,660 716,662" fill="#bcc7d4"/>
<rect x="757" y="616" width="58.5" height="29.2" fill="#b3bfce"/>
<rect x="822.6" y="616" width="56.2" height="28.4" fill="#b3bfce"/>
<rect x="886.4" y="615.5" width="57.1" height="28.5" fill="#b3bfce"/>
<polyline points="757,630.6 815.5,630.6" fill="none" stroke="#c9d3df" stroke-width="28.2" stroke-dasharray="0.700 2.100" opacity="0.8"/>
<polyline points="757,644.7 815.5,644.7" fill="none" stroke="#8e99a8" stroke-width="1"/>
<polyline points="822.6,630.2 878.8,630.2" fill="none" stroke="#c9d3df" stroke-width="27.4" stroke-dasharray="0.700 2.100" opacity="0.8"/>
<polyline points="822.6,643.9 878.8,643.9" fill="none" stroke="#8e99a8" stroke-width="1"/>
<polyline points="886.4,629.75 943.5,629.75" fill="none" stroke="#c9d3df" stroke-width="27.5" stroke-dasharray="0.700 2.100" opacity="0.8"/>
<polyline points="886.4,643.5 943.5,643.5" fill="none" stroke="#8e99a8" stroke-width="1"/>
<rect x="752" y="617" width="5" height="27" fill="#555"/>
<rect x="815.5" y="617" width="7.1" height="27" fill="#4c4c4c"/>
<rect x="878.8" y="617" width="7.6" height="27" fill="#4c4c4c"/>
<g filter="url(#texVeg2)">
<polygon points="700,645.5 946,644.5 948.5,651 929.5,690 929.5,713 908,713 908,727 700,727" fill="#85776a"/>
</g>
<g filter="url(#blur3)">
<ellipse cx="889" cy="691" rx="15" ry="8" fill="#7b7a4c" opacity="0.7"/>
<ellipse cx="834" cy="705" rx="15" ry="9" fill="#7d7a50" opacity="0.6"/>
<ellipse cx="902" cy="666" rx="18" ry="9" fill="#9a9668" opacity="0.55"/>
<ellipse cx="790" cy="712" rx="12" ry="6" fill="#7d7a50" opacity="0.4"/>
<ellipse cx="760" cy="690" rx="25" ry="12" fill="#7a6552" opacity="0.35"/>
<ellipse cx="735" cy="670" rx="10" ry="14" fill="#7a6552" opacity="0.35"/>
</g>
<rect x="872.5" y="702" width="33.5" height="23" fill="#a8a8a2" filter="url(#texGravel)"/>
<polygon points="905.4,680.7 934,680.7 929.5,690 929.5,713 905.4,713" fill="#9c9ea0" filter="url(#texGravel)"/>
<polygon points="958.7,606 1034,606 1046.4,612 1046.4,701 939.7,701 939.7,690 958.7,652" fill="#a6a69f" filter="url(#texGravel)"/>
<polygon points="948.5,651 958.7,651 939.7,690 939.7,713 929.5,713 929.5,690" fill="#5a5a5a"/>
<rect x="939.7" y="680.8" width="106.7" height="20.2" fill="#999c9e" filter="url(#texGravel)"/>
<rect x="939.7" y="700" width="19" height="13" fill="#999c9e" filter="url(#texGravel)"/>
<rect x="962" y="606" width="72.5" height="39" fill="#3b3b3b"/>
<rect x="962" y="606" width="72.5" height="5" fill="#4a4a4a"/>
<rect x="964.5" y="610.7" width="12.2" height="33.3" fill="#dcdedf"/>
<rect x="964.5" y="610.7" width="12.2" height="2.3" fill="#b9bcbf"/>
<rect x="983" y="610.7" width="12.2" height="33.3" fill="#dcdedf"/>
<rect x="983" y="610.7" width="12.2" height="2.3" fill="#b9bcbf"/>
<rect x="1001.7" y="610.7" width="12.2" height="33.3" fill="#dcdedf"/>
<rect x="1001.7" y="610.7" width="12.2" height="2.3" fill="#b9bcbf"/>
<rect x="1020.6" y="610.7" width="12.2" height="33.3" fill="#dcdedf"/>
<rect x="1020.6" y="610.7" width="12.2" height="2.3" fill="#b9bcbf"/>
<rect x="1034.5" y="606" width="11.5" height="74" fill="#9d978b" filter="url(#texGravel)"/>
<rect x="994.7" y="654" width="35.3" height="26.4" fill="#5c5e61"/>
<rect x="1000.8" y="660.6" width="23.2" height="11.9" fill="#d7dadc"/>
<g filter="url(#texVeg)">
<polygon points="958,713 958,700.5 1046,700.5 1046,699.7 1262,699.7 1262,724 958,724" fill="#716b47"/>
<polygon points="1160,700 1262,700 1262,724 1175,724" fill="#5f5c3e"/>
</g>
<rect x="908" y="712.4" width="49.4" height="12.6" fill="#3c3c3c"/>
<rect x="917.5" y="716" width="6.5" height="6.5" fill="#e2d9c5"/>
<rect x="919" y="717.5" width="3.5" height="3.5" fill="#e0a030"/>
<rect x="947.8" y="716" width="6.5" height="6.5" fill="#e2d9c5"/>
<rect x="949.3" y="717.5" width="3.5" height="3.5" fill="#e0a030"/>
<rect x="600" y="725.5" width="700" height="3.5" fill="#a5a5a3"/>
<rect x="600" y="729" width="700" height="8.5" fill="#4b4b4b"/>
<rect x="600" y="737" width="700" height="30.5" fill="#5d5d5d"/>
<rect x="600" y="767.5" width="700" height="11" fill="#4a4a4a"/>
<rect x="600" y="778" width="285" height="14" fill="#4a4a4a"/>
<polyline points="600,737.5 1300,737.5" fill="none" stroke="#c9c9c9" stroke-width="1"/>
<polyline points="600,766.7 1300,766.7" fill="none" stroke="#b5b5b5" stroke-width="1"/>
<polyline points="753,752.3 1300,752.3" fill="none" stroke="#d8d8d8" stroke-width="1.2" stroke-dasharray="22 23.500"/>
<rect x="925" y="728" width="22.8" height="10.2" fill="#707070" stroke="#e8e8e8" stroke-width="1"/>
<polyline points="927,738 934,728" fill="none" stroke="#e8e8e8" stroke-width="1"/>
<polyline points="933,738 940,728" fill="none" stroke="#e8e8e8" stroke-width="1"/>
<polyline points="939,738 946,728" fill="none" stroke="#e8e8e8" stroke-width="1"/>
<polyline points="907.9,714 907.9,786" fill="none" stroke="#3d4248" stroke-width="2.2"/>
<g filter="url(#texVeg2)">
<polygon points="885,778.5 1110,778.5 1110,860 885,860" fill="#bba483"/>
</g>
<g filter="url(#blur3)">
<polygon points="938,800 960,796 960,836 950,832 942,820" fill="#6f6a45" opacity="0.7"/>
<polygon points="1041,790 1051,790 1049,825 1041,830" fill="#6a6842" opacity="0.7"/>
<ellipse cx="925" cy="790" rx="8" ry="5" fill="#6f6a45" opacity="0.5"/>
</g>
<rect x="962.4" y="778.8" width="31.6" height="63.2" fill="#a6a9ac"/>
<polygon points="984,778.5 1034.6,778.5 1025.7,789.5 1025.7,842 994,842 994,789.5" fill="#555657"/>
<polyline points="994,790.7 1025.7,790.7" fill="none" stroke="#e6e6e6" stroke-width="1.5"/>
<text x="1010" y="804" text-anchor="middle" font-size="7.500" font-weight="700" fill="#e9e9e9" font-family="'Liberation Sans','Noto Sans CJK JP',sans-serif" textLength="15" lengthAdjust="spacingAndGlyphs">とまれ</text>
<polyline points="994,832 1025.7,830" fill="none" stroke="#3f4a5a" stroke-width="1"/>
<polyline points="703,288 1073,288 1073,651 1091.5,668 1218.3,668 1232.2,651.5 1232.2,362" fill="none" stroke="#d6d6d4" stroke-width="2"/>
<polyline points="703,316.5 878.8,316.5 891.8,331.4 891.8,585.6 672,585.6" fill="none" stroke="#d6d6d4" stroke-width="1.8"/>
<polyline points="1268.5,388 1268.5,592" fill="none" stroke="#d6d6d4" stroke-width="1.8"/>
<polyline points="1047,598 1047,698 1262,698" fill="none" stroke="#d6d6d4" stroke-width="1.8"/>
<polyline points="891,585.3 1029.4,584.5 1046.4,597.8" fill="none" stroke="#d6d6d4" stroke-width="1.6"/>
<polyline points="900,585.2 1029.4,584.5" fill="none" stroke="#55585c" stroke-width="1.6" stroke-dasharray="2 30"/>
<polyline points="1150.3,176 1174,328 1219.5,549.4 1224,600 1222,607 1232,607" fill="none" stroke="#d4d4d2" stroke-width="1.7"/>
<polyline points="1182.8,197.6 1182.8,327 1174.5,327" fill="none" stroke="#a8a49c" stroke-width="1.1"/>
<polyline points="715,288 1073,288 1073,651" fill="none" stroke="#55585c" stroke-width="2" stroke-dasharray="2 27"/>
<polyline points="1100,668 1218.3,668" fill="none" stroke="#55585c" stroke-width="2" stroke-dasharray="2 27"/>
<polyline points="1232.2,640 1232.2,370" fill="none" stroke="#55585c" stroke-width="2" stroke-dasharray="2 27"/>
<polyline points="1268.5,392 1268.5,592" fill="none" stroke="#55585c" stroke-width="1.8" stroke-dasharray="2 27"/>
<polyline points="1047,610 1047,698 1262,698" fill="none" stroke="#55585c" stroke-width="1.8" stroke-dasharray="2 33"/>
<polyline points="891.8,345 891.8,585" fill="none" stroke="#55585c" stroke-width="1.8" stroke-dasharray="2 31"/>
<polyline points="940,315 1029,315" fill="none" stroke="#55585c" stroke-width="2" stroke-dasharray="2 30"/>
<polyline points="940,402.7 1035,402.7" fill="none" stroke="#55585c" stroke-width="2" stroke-dasharray="2 30"/>
<polyline points="940,421.4 1036,421.4" fill="none" stroke="#55585c" stroke-width="2" stroke-dasharray="2 30"/>
<polyline points="940,554.6 1030,554.6" fill="none" stroke="#55585c" stroke-width="2" stroke-dasharray="2 30"/>
<polyline points="1044.8,340 1044.8,394" fill="none" stroke="#55585c" stroke-width="2" stroke-dasharray="2 30"/>
<polyline points="1044.8,435 1044.8,540" fill="none" stroke="#55585c" stroke-width="2" stroke-dasharray="2 30"/>
<polyline points="920,340 920,394" fill="none" stroke="#55585c" stroke-width="2" stroke-dasharray="2 30"/>
<polyline points="921.2,440 921.2,540" fill="none" stroke="#55585c" stroke-width="2" stroke-dasharray="2 30"/>
<polyline points="1152,186 1174,328 1219.5,549.4" fill="none" stroke="#3e4148" stroke-width="1.7" stroke-dasharray="2.500 41"/>
<polyline points="730,726.8 1240,726.8" fill="none" stroke="#5f646b" stroke-width="2" stroke-dasharray="3 45"/></g>
<g id="orthoThumb" transform="translate(159.500 266.700) scale(0.333) rotate(90) translate(-980.500 -476)"><use href="#orthoG"/></g></defs>
  <rect x="319" y="94" width="1259" height="817" fill="#f8f4e0"/>
    <path d="M1578 503 L1564.500 765 L1564.500 775 L1578 775 Z" fill="#f5efe6"/>
  <!-- buildings -->
  <g fill="#efe6dc" stroke="#e3d9ce" stroke-width="1">
    <path d="M319 94 H419 L420 244 L319 245 Z"/>
    <path d="M359.500 362.500 L482 362 L485 606 L361 607 Z"/>
    <path d="M681 802 L813 798.500 L813 846 L681 849 Z"/>
    <path d="M670 896.500 L916 893.500 L916 912 L670 912 Z"/>
    <path d="M1457 187 L1507 186.500 L1508 449.500 L1458 450 Z"/>
  </g>
  <!-- dotted lines -->
  <g fill="none" stroke="#cab4a1" stroke-width="3" stroke-dasharray="4.500 2.500">
    <path d="M604 731 L1380 727.400 L1578 722"/>
    <path d="M598 773 L1180 770.600 L1380 768 L1578 763"/>
  </g>
  <!-- roads casing -->
  <g fill="none" stroke="#dcdad6" stroke-width="10.500" stroke-linejoin="round" stroke-linecap="round">
    <path d="M582.500 90 L574 240 L552 600 L530 915"/>
    <path d="M315 308 L720 303.500"/>
    <path d="M315 753 L700 752.500 L1243 750 L1582 744"/>
    <path d="M1147.700 752 L1147.700 915"/>
    <path d="M1011 840 L1011 906 L1147.700 906"/>
    <path d="M1249 90 L1252 374 L1255.500 600 L1258 678.300 L1378 674.800 L1458.500 676.500 L1483.400 646 L1482.800 450"/>
    <path d="M1374 90 L1377.500 500 L1378 674.800"/>
    <path d="M1476 90 L1479.500 188"/>
  </g>
  <g fill="none" stroke="#fff" stroke-width="8" stroke-linejoin="round" stroke-linecap="round">
    <path d="M582.500 90 L574 240 L552 600 L530 915"/>
    <path d="M315 308 L720 303.500"/>
    <path d="M315 753 L700 752.500 L1243 750 L1582 744"/>
    <path d="M1147.700 752 L1147.700 915"/>
    <path d="M1011 840 L1011 906 L1147.700 906"/>
    <path d="M1249 90 L1252 374 L1255.500 600 L1258 678.300 L1378 674.800 L1458.500 676.500 L1483.400 646 L1482.800 450"/>
    <path d="M1374 90 L1377.500 500 L1378 674.800"/>
    <path d="M1476 90 L1479.500 188" stroke-linecap="round"/>
  </g>
  <!-- tunnel -->
  <g fill="none" stroke="#d9d2cb" stroke-width="1" stroke-dasharray="3 2">
    <path d="M1476.500 192 L1479.500 450"/><path d="M1483.500 192 L1486.500 450"/>
  </g>
  <path d="M1479.700 192 L1482.800 450" stroke="#f4ede6" stroke-width="6" fill="none"/>
  <!-- oneway arrows -->
  <g fill="none" stroke="#bdbdbd" stroke-width="1.300">
    <path d="M1147.700 769 V787 M1144.200 783 L1147.700 787.500 L1151.200 783"/>
    <path d="M1147.700 846 V865 M1144.200 861 L1147.700 865.500 L1151.200 861"/>
    <path d="M1011 908 V890 M1007.500 894.500 L1011 890 L1014.500 894.500"/>
  </g>
  <use href="#orthoG"/>
</svg>

<!-- collapse button -->
<div class="abs" style="left:0;top:0;width:40px;height:41px;background:#fff;border:1px solid #dcdcdc">
  <svg class="abs" style="left:11px;top:12px" width="16" height="16" viewBox="0 0 16 16" fill="none" stroke="#555" stroke-width="2"><path d="M10.500 3 L5.500 8 L10.500 13"/></svg>
</div>
<div class="rbtn" style="left:52px;top:18px"><svg width="32" height="32" viewBox="0 0 32 32" fill="none" stroke="#2b2b2b" stroke-width="1.700" stroke-linecap="round" stroke-linejoin="round"><path d="M8.500 17.500 H20 A4.300 4.300 0 0 0 20 9 H13"/><path d="M12.500 13.500 L8.500 17.500 L12.500 21.500"/></svg></div>
<div class="rbtn" style="left:112px;top:18px;background:#3aabef"><svg width="32" height="32" viewBox="0 0 32 32" fill="#fff"><circle cx="16" cy="9.300" r="2.400"/><circle cx="16" cy="16" r="2.400"/><circle cx="16" cy="22.700" r="2.400"/></svg></div>
<div class="rbtn" style="left:156px;top:18px"><svg width="32" height="32" viewBox="0 0 32 32" fill="none" stroke="#2b2b2b" stroke-width="1.600"><rect x="7" y="10.800" width="18" height="10.400"/><path d="M11 10.800v4.500M14.500 10.800v3.200M18 10.800v4.500M21.500 10.800v3.200"/></svg></div>
<div class="rbtn" style="left:200px;top:18px"><svg width="32" height="32" viewBox="0 0 32 32" fill="none" stroke="#2b2b2b" stroke-width="1.600" stroke-linejoin="round"><path d="M16 7.500 L24.800 14 L21.500 24.200 H10.500 L7.200 14 Z"/></svg></div>
<div class="rbtn" style="left:244px;top:18px"><svg width="32" height="32" viewBox="0 0 32 32" fill="none" stroke="#2b2b2b" stroke-width="1.500" stroke-linejoin="round"><path d="M16 6.800 L7.500 20.500 L11 24.500 H21 L24.500 20.500 Z"/><path d="M16 6.800 L11 24.500 M16 6.800 L21 24.500"/></svg></div>
<div class="rbtn" style="left:288px;top:18px"><svg width="32" height="32" viewBox="0 0 32 32" fill="none" stroke="#2b2b2b" stroke-width="1.500" stroke-linejoin="round"><path d="M6.500 19 L11.500 11 L13.700 13.200 L19.300 7.200 L24 13.800 H26"/><rect x="13.500" y="17.800" width="12" height="6.200"/><path d="M16.500 17.800v2.500M19.500 17.800v2.500M22.500 17.800v2.500" stroke-width="1.100"/></svg></div>
<div class="rbtn" style="left:332px;top:18px"><svg width="32" height="32" viewBox="0 0 32 32" fill="none" stroke="#2b2b2b" stroke-width="1.600"><rect x="8" y="8.800" width="6.500" height="5"/><path d="M17.500 14.500 V8.800 H25 V14.500 M21.300 8.800 V14.500"/><path d="M14.500 17.500 H8 V24 H14.500 M8 20.700 H13.500"/><rect x="17.500" y="17" width="8" height="8" fill="#2b2b2b" stroke="none"/></svg></div>
<div class="rbtn" style="left:376px;top:18px"><svg width="32" height="32" viewBox="0 0 32 32" fill="none" stroke="#2b2b2b" stroke-width="1.600" stroke-linejoin="round"><path d="M14 13 H8.500 V24 H19.500 V20"/><path d="M14.300 19.200 L15.300 15.500 L23 7.800 L26 10.800 L18.300 18.500 Z"/></svg></div>
<div class="rbtn" style="left:420px;top:18px;background:#e7e3da;box-shadow:0 2px 3px rgba(0,0,0,.22)"><svg width="32" height="32" viewBox="0 0 32 32"><path d="M8 24 L14 9.500 Q16.500 6 19.500 9.500 L21 13.500 L15.500 24 Z" fill="#8d887f"/><g transform="translate(22.500 20.500) rotate(-35)"><rect x="-6" y="-3.200" width="12" height="6.400" fill="#e7e3da" stroke="#8d887f" stroke-width="1.300"/><path d="M-3 -3.200v2.800M0 -3.200v2.800M3 -3.200v2.800" stroke="#8d887f" stroke-width="1"/></g></svg></div>

<!-- left round buttons -->
<div class="rbtn" style="left:10px;top:517px"><svg width="32" height="32" viewBox="0 0 32 32" fill="none" stroke="#2b2b2b" stroke-width="1.500"><path d="M7.500 11.500 V7.500 H11.500 M20.500 7.500 H24.500 V11.500 M24.500 20.500 V24.500 H20.500 M11.500 24.500 H7.500 V20.500"/><path d="M13.300 10.500 V19 H22" stroke-width="1.800"/><path d="M10.600 13.200 L13.300 9.800 L16 13.200 Z M19.300 16.300 L22.700 19 L19.300 21.700 Z" fill="#2b2b2b" stroke="none"/></svg></div>
<div class="rbtn" style="left:10px;top:567px"><svg width="32" height="32" viewBox="0 0 32 32" fill="none" stroke="#2b2b2b" stroke-width="1.500"><path d="M7.500 11.500 V7.500 H11.500 M20.500 7.500 H24.500 V11.500 M24.500 20.500 V24.500 H20.500 M11.500 24.500 H7.500 V20.500"/><path d="M10.500 11.200 L14.300 12.200 V21 L10.500 20 Z M21.800 11.200 L18 12.200 V21 L21.800 20 Z" fill="#2b2b2b" stroke="none"/><path d="M14.300 12.200 L18 11.200 V20 L14.300 21 Z" fill="#fff" stroke="#2b2b2b" stroke-width="1"/></svg></div>
<div class="abs" style="left:8px;top:616px;width:35px;height:35px;border-radius:4px;background:#d2d2d2">
  <svg class="abs" style="left:3px;top:3px" width="30" height="30" viewBox="0 0 22 22"><path d="M7.500 12.500 V5.200 Q7.500 3.800 8.700 3.800 Q9.900 3.800 9.900 5.200 V4 Q9.900 2.600 11.100 2.600 Q12.300 2.600 12.300 4 V4.800 Q12.300 3.500 13.500 3.500 Q14.700 3.500 14.700 4.800 V6.200 Q14.700 5 15.800 5 Q17 5 17 6.200 V13.500 Q17 16.500 15.500 19.500 H8.500 Q6.500 16.500 3.600 12.800 Q2.800 11.600 3.800 10.900 Q4.800 10.300 5.700 11.300 Z" fill="#fff" stroke="#111" stroke-width="1.150" stroke-linejoin="round"/><path d="M9.900 5v5M12.300 5v5M14.700 6v4" stroke="#111" stroke-width="1" fill="none"/></svg>
</div>
<!-- zoom controls -->
<div class="abs" style="left:10px;top:688px;width:29px;height:87px;border-radius:4px;background:#fff;box-shadow:0 0 0 2px rgba(0,0,0,.1)">
  <div class="abs" style="left:0;top:29px;width:29px;height:1px;background:#ddd"></div>
  <div class="abs" style="left:0;top:58px;width:29px;height:1px;background:#ddd"></div>
  <svg class="abs" style="left:0;top:0" width="29" height="87" viewBox="0 0 29 87"><path d="M8.800 14.500 H20.200 M14.500 8.800 V20.200" stroke="#333" stroke-width="2.400" fill="none"/><path d="M8.800 43.500 H20.200" stroke="#333" stroke-width="2.400" fill="none"/><path d="M6.500 72.500 L13.500 68.500 V76.500 Z" fill="#222"/><path d="M23.500 72.500 L16.500 68.500 V76.500 Z" fill="#bbb"/></svg>
</div>
<!-- scale -->
<div class="abs" style="left:10px;top:785px;width:45px;height:22px;border:2px solid #333;border-top:none;background:rgba(255,255,255,.75);font-size:10px;line-height:20px;padding-left:5px;color:#333">10 m</div>
<!-- bottom-center tray -->
<div class="abs" style="left:584px;top:748px;width:94px;height:44px;border-radius:9px;background:rgba(255,255,255,.72);box-shadow:0 1px 3px rgba(0,0,0,.08)"></div>
<div class="rbtn" style="left:592px;top:753px"><svg width="32" height="32" viewBox="0 0 32 32" fill="none" stroke="#2b2b2b" stroke-width="1.400"><path d="M20 9.500 V7 H7 V18 H9.500"/><path d="M22.500 12 V9.500 H9.500 V20.500 H12"/><rect x="12" y="12" width="13" height="13" fill="#fff"/><path d="M12 25 V22 L15.500 17.500 L18 20.500 L21 16 L25 21 V25 Z" fill="#2b2b2b" stroke="none"/></svg></div>
<div class="rbtn" style="left:638px;top:753px"><svg width="32" height="32" viewBox="0 0 32 32" fill="none" stroke="#2b2b2b" stroke-width="1.500" stroke-linejoin="round"><path d="M16 6.500 L25 11.500 L16 16.500 L7 11.500 Z"/><path d="M9.500 14.800 L7 16.200 L16 21.200 L25 16.200 L22.500 14.800"/><path d="M9.500 19.500 L7 20.900 L16 25.900 L25 20.900 L22.500 19.500"/></svg></div>
<!-- date filter -->
<div class="abs" style="left:891px;top:18px;width:290px;height:39px;border:1px solid #ccc;border-radius:4px;background:#fff">
  <svg class="abs" style="left:11px;top:8px" width="20" height="20" viewBox="0 0 20 20"><path d="M2.500 4 H17.500 V18 H2.500 Z" fill="#333"/><path d="M5.500 1.500 V5 M14.500 1.500 V5" stroke="#333" stroke-width="2.200"/><g fill="#fff"><rect x="4.300" y="8" width="2.600" height="2.300"/><rect x="8.700" y="8" width="2.600" height="2.300"/><rect x="13.100" y="8" width="2.600" height="2.300"/><rect x="4.300" y="11.500" width="2.600" height="2.300"/><rect x="8.700" y="11.500" width="2.600" height="2.300"/><rect x="13.100" y="11.500" width="2.600" height="2.300"/><rect x="4.300" y="15" width="2.600" height="1.800"/><rect x="8.700" y="15" width="2.600" height="1.800"/><rect x="13.100" y="15" width="2.600" height="1.800"/></g></svg>
  <div class="abs" style="left:37px;top:0;font-size:15.500px;line-height:36px;color:#a8a8a8;letter-spacing:.45px">表示期間を限定...</div>
</div>
<!-- map button -->
<div class="abs" style="left:1207px;top:17px;width:40px;height:40px;border-radius:4px;background:#fff;box-shadow:0 1px 3px rgba(0,0,0,.35)">
  <svg class="abs" style="left:9px;top:9px" width="22" height="22" viewBox="0 0 22 22"><path d="M2.200 4.800 L7.800 2.800 V17 L2.200 19.200 Z M19.800 2.800 L14.200 4.800 V19.200 L19.800 17 Z" fill="#757575"/><path d="M7.800 2.800 L14.200 4.800 V19.200 L7.800 17 Z" fill="none" stroke="#757575" stroke-width="1.200"/></svg>
</div>
<div class="rbtn" style="left:1211px;top:72px"><svg width="32" height="32" viewBox="0 0 32 32" fill="#222"><circle cx="16" cy="9.100" r="2.500"/><circle cx="16" cy="16" r="2.500"/><circle cx="16" cy="22.900" r="2.500"/></svg></div>
<!-- attribution -->
<div class="abs" style="left:917px;top:798px;width:342px;height:19px;background:rgba(255,255,255,.5);font-size:12px;line-height:18px;color:#333;padding-left:5px;white-space:nowrap"><span style="color:#000">© SkymatiX</span> | <span style="color:#555">© OpenMapTiles © OpenStreetMap contributors</span></div>

<!-- info panel -->
<div class="abs" style="left:1038px;top:677px;width:213px;height:110px;border-radius:4px;background:#fff;box-shadow:0 1px 4px rgba(0,0,0,.3)">
  <div class="abs" style="left:9px;top:7px;font-size:13px;line-height:20px;color:#222">地理座標系</div>
  <svg class="abs" style="left:187px;top:17px" width="12" height="7" viewBox="0 0 12 7"><path d="M0.500 0.500 H11.500 L6 6.500 Z" fill="#777"/></svg>
  <div class="abs" style="left:8px;top:32px;width:197px;height:1px;background:#777"></div>
  <div class="abs" style="right:8px;top:41px;font-size:13px;line-height:18px;color:#222;text-align:right;white-space:nowrap">37.6298525° N</div>
  <div class="abs" style="right:8px;top:59px;font-size:13px;line-height:18px;color:#222;text-align:right;white-space:nowrap">141.0122334° E</div>
  <div class="abs" style="right:8px;top:81.500px;font-size:13px;line-height:18px;color:#222;text-align:right;white-space:nowrap">- m</div>
</div>
<!-- menu 1 -->
<div class="abs" style="left:1070px;top:689px;width:87px;height:111px;border-radius:4px;background:#fff;box-shadow:0 2px 6px rgba(0,0,0,.3);overflow:hidden">
  <div class="abs" style="left:16px;top:13px;font-size:13px;line-height:20px;color:#222">標高</div>
  <div class="abs" style="left:0;top:38px;width:87px;height:36px;background:#e8eef9"></div>
  <div class="abs" style="left:16px;top:45px;font-size:13px;line-height:20px;color:#222;white-space:nowrap">標高(楕円体高)</div>
  <div class="abs" style="left:22px;top:78px;font-size:13px;line-height:20px;color:#2b5fc4;white-space:nowrap">測地系</div>
</div>
<!-- menu 2 -->
<div class="abs" style="left:1095px;top:727px;width:62px;height:74px;border-radius:4px;background:#fff;box-shadow:0 2px 6px rgba(0,0,0,.3);overflow:hidden">
  <div class="abs" style="left:0;top:0;width:62px;height:33px;background:#f3f3f3"></div>
  <div class="abs" style="left:16px;top:6px;font-size:14px;line-height:20px;color:#222">編集</div>
  <div class="abs" style="left:16px;top:39px;font-size:14px;line-height:20px;color:#222">削除</div>
</div>
<svg class="abs" style="left:1080px;top:705px" width="90" height="60" viewBox="1399 799 90 60"><ellipse cx="1444.400" cy="832.300" rx="37.700" ry="24.500" fill="none" stroke="#ee3b22" stroke-width="3.300"/></svg>

</div>

<div class="abs" style="left:0;top:911px;width:1578px;height:2px;background:#9c9c9c"></div>
<div class="abs" style="left:0;top:911px;width:32px;height:2px;background:#0d2b31"></div>
<div class="abs" style="left:296px;top:911px;width:366px;height:2px;background:#3a1c12"></div>
<div class="abs" style="left:662px;top:911px;width:180px;height:2px;background:repeating-linear-gradient(90deg,#8a9aa5 0,#8a9aa5 14px,#4a2a1a 14px,#4a2a1a 26px)"></div>
<div class="abs" style="left:842px;top:911px;width:75px;height:2px;background:#0d1f24"></div>
<svg class="abs" style="left:0;top:901px" width="10" height="10" viewBox="0 0 10 10"><path d="M0 0 A10 10 0 0 0 10 10 L0 10 Z" fill="#0d2b31"/></svg>

</body>
</html>
